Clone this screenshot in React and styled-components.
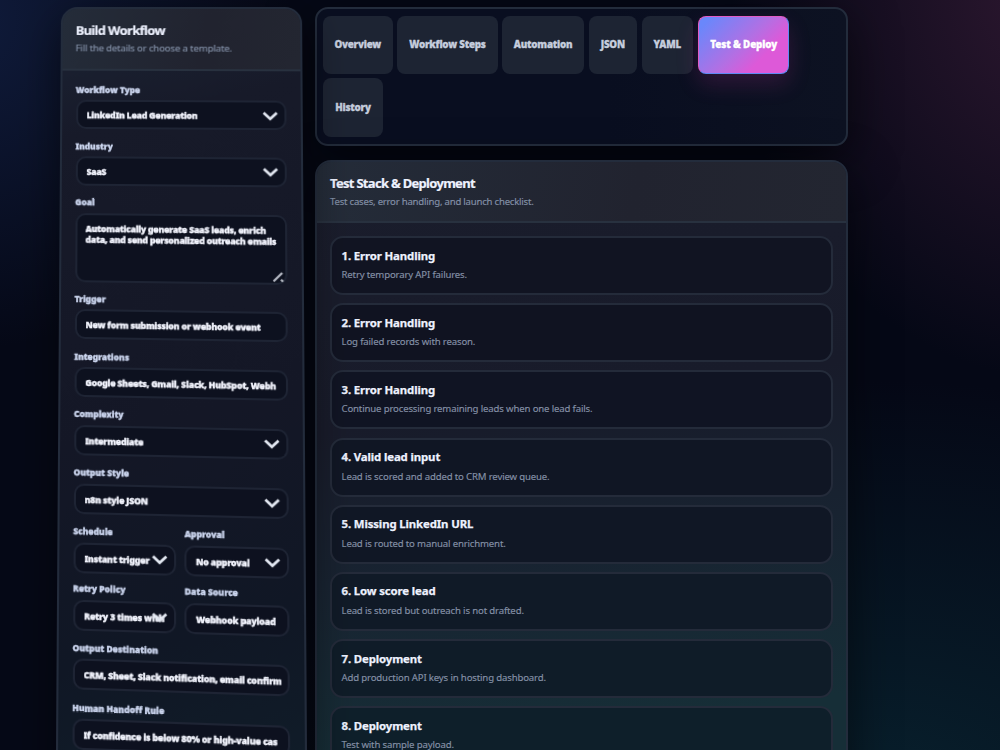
import React from "react";
import styled, { createGlobalStyle, css } from "styled-components";

const GlobalStyle = createGlobalStyle`
  *, *::before, *::after { box-sizing: border-box; }
  body {
    margin: 0;
    overflow: hidden;
    background: #030613;
    font-family: "Noto Sans", "Open Sans", sans-serif;
    color: #eef2ff;
  }
`;

const Page = styled.main`
  display: flex;
  align-items: flex-start;
  gap: 13px;
  height: 750px;
  padding: 7px 0 0 61px;
  overflow: hidden;
  background:
    radial-gradient(circle at -40px 20px, rgba(26, 46, 96, 0.5), transparent 330px),
    radial-gradient(ellipse 330px 400px at 1060px -20px, rgba(74, 34, 66, 0.6), transparent),
    radial-gradient(ellipse 640px 420px at 880px 800px, rgba(10, 48, 60, 0.6), transparent),
    #050816;
`;

const surface = css`
  border: 2px solid #232c3c;
  box-shadow: 0 14px 48px rgba(0, 0, 0, 0.55);
`;

const Sidebar = styled.aside`
  ${surface}
  flex: none;
  width: 241px;
  height: 860px;
  border-radius: 17px;
  overflow: hidden;
  background: linear-gradient(165deg, #1c2435 0, #171a29 130px, #141726 430px, #101725 640px, #10202b 100%);
  transform-origin: 0 0;
  transform: matrix3d(0.988493, 0, 0, -0.000047948, -0.0064706, 0.96023, 0, -0.0000536, 0, 0, 1, 0, 0, 0, 0, 1);
`;

const PanelHeader = styled.header`
  height: ${(p) => p.$height}px;
  padding: ${(p) => p.$top}px 13px 0;
  border-bottom: 2px solid #28313f;
  background: linear-gradient(100deg, #242c39, #21232f 60%, #232631);
`;

const PanelTitle = styled.h2`
  margin: 0;
  font-size: 13px;
  line-height: 18px;
  font-weight: 700;
  letter-spacing: ${(p) => p.$tracking}px;
  -webkit-text-stroke: 0.2px currentColor;
  white-space: nowrap;
`;

const PanelNote = styled.p`
  margin: 1px 0 0;
  font-size: 9.6px;
  line-height: 18px;
  letter-spacing: ${(p) => p.$tracking}px;
  color: #8390a7;
  -webkit-text-stroke: 0.15px currentColor;
  white-space: nowrap;
`;

const Form = styled.div`
  display: flex;
  flex-direction: column;
  gap: 10.5px;
  padding: 13px 14px 0 13.5px;
`;

const FieldRow = styled.div`
  display: flex;
  gap: 8px;
  margin-bottom: ${(p) => p.$pull ?? 0}px;
`;

const Field = styled.div`
  display: flex;
  flex: 1 1 0;
  min-width: 0;
  flex-direction: column;
  gap: 5.4px;
`;

const FieldLabel = styled.span`
  height: 12px;
  font-size: 8.4px;
  line-height: 13px;
  font-weight: 900;
  letter-spacing: -0.03px;
  color: #cbd5ee;
  -webkit-text-stroke: 0.35px currentColor;
  white-space: nowrap;
`;

const Control = styled.span`
  position: relative;
  display: block;
  height: ${(p) => (p.$tall ? 70 : 30)}px;
  padding: ${(p) => (p.$tall ? "9.5px 6px 0 8.5px" : "8px 6px 0 9px")};
  border: 2px solid #1e2434;
  border-radius: 10px;
  background: #0d111f;
`;

const Value = styled.span`
  display: block;
  overflow: hidden;
  white-space: ${(p) => (p.$wrap ? "pre" : "nowrap")};
  font-size: 8.6px;
  line-height: ${(p) => (p.$wrap ? 11 : 12)}px;
  font-weight: 900;
  letter-spacing: ${(p) => (p.$wrap ? -0.22 : -0.19)}px;
  color: #f4f6ff;
  -webkit-text-stroke: 0.35px currentColor;
`;

const Chevron = styled.svg`
  position: absolute;
  top: 8.5px;
  right: 6px;
  width: 16px;
  height: 10px;
  fill: none;
  stroke: #e3e8f2;
  stroke-width: 2.7;
`;

const Grip = styled.svg`
  position: absolute;
  right: 1px;
  bottom: 0;
  width: 12px;
  height: 12px;
  fill: none;
  stroke: #b6bac4;
  stroke-width: 2.2;
`;

const Content = styled.section`
  flex: none;
  display: flex;
  flex-direction: column;
  gap: 14px;
  width: 533px;
`;

const TabBar = styled.nav`
  ${surface}
  display: flex;
  flex-wrap: wrap;
  align-content: flex-start;
  gap: 4.7px;
  height: 138.5px;
  padding: 7px 0 0 6px;
  border-radius: 13px;
  background: linear-gradient(90deg, #090e20 55%, #0d1222);
`;

const Tab = styled.button`
  width: ${(p) => p.$width}px;
  height: ${(p) => p.$height ?? 57.5}px;
  padding: 0;
  border: 0;
  border-radius: 8px;
  font-family: inherit;
  font-size: 9.8px;
  font-weight: 900;
  letter-spacing: -0.22px;
  color: #c5cddd;
  -webkit-text-stroke: 0.3px currentColor;
  background: #1d2433;
  white-space: nowrap;
  ${(p) =>
    p.$active &&
    css`
      margin-left: 1px;
      color: #fff;
      letter-spacing: -0.12px;
      border: 1px solid;
      border-color: #e05bc4 #5f8af5 #5f8af5 #e05bc4;
      background: linear-gradient(135deg, #6a87fb 8%, #b36fe3 50%, #dd59d8 72%);
      box-shadow: 0 10px 22px rgba(190, 50, 150, 0.2);
    `}
`;

const Card = styled.article`
  ${surface}
  height: 640px;
  border-radius: 16px;
  overflow: hidden;
  background: linear-gradient(172deg, #1a1d2c 0, #181b2a 270px, #182331 420px, #162e37 600px);
`;

const List = styled.ol`
  display: flex;
  flex-direction: column;
  gap: 8.2px;
  margin: 0;
  padding: 13.5px 13px;
  list-style: none;
`;

const Item = styled.li`
  height: 59px;
  padding: 8.5px 9.5px 0;
  border: 2px solid #242b3a;
  border-radius: 13px;
  background: ${(p) => p.$tone};
`;

const ItemTitle = styled.h3`
  margin: 0;
  font-size: 11.4px;
  line-height: 17px;
  font-weight: 700;
  letter-spacing: -0.13px;
  -webkit-text-stroke: 0.25px currentColor;
`;

const ItemNote = styled.p`
  margin: 3.5px 0 0;
  font-size: 9.6px;
  line-height: 15px;
  letter-spacing: -0.15px;
  color: #8490a6;
  -webkit-text-stroke: 0.15px currentColor;
`;

const rows = [
  { fields: [{ label: "Workflow Type", value: "LinkedIn Lead Generation", kind: "select" }] },
  { fields: [{ label: "Industry", value: "SaaS", kind: "select" }] },
  {
    pull: -0.7,
    fields: [
      {
        label: "Goal",
        value: "Automatically generate SaaS leads, enrich\ndata, and send personalized outreach emails",
        kind: "area",
      },
    ],
  },
  { fields: [{ label: "Trigger", value: "New form submission or webhook event" }] },
  { fields: [{ label: "Integrations", value: "Google Sheets, Gmail, Slack, HubSpot, Webh" }] },
  { fields: [{ label: "Complexity", value: "Intermediate", kind: "select" }] },
  { fields: [{ label: "Output Style", value: "n8n style JSON", kind: "select" }] },
  {
    pull: -2,
    fields: [
      { label: "Schedule", value: "Instant trigger", kind: "select" },
      { label: "Approval", value: "No approval", kind: "select" },
    ],
  },
  {
    pull: -0.5,
    fields: [
      { label: "Retry Policy", value: "Retry 3 times with", kind: "select" },
      { label: "Data Source", value: "Webhook payload" },
    ],
  },
  { pull: 0.5, fields: [{ label: "Output Destination", value: "CRM, Sheet, Slack notification, email confirm" }] },
  { fields: [{ label: "Human Handoff Rule", value: "If confidence is below 80% or high-value cas" }] },
];

const tabs = [
  ["Overview", 69.5],
  ["Workflow Steps", 100.5],
  ["Automation", 81.5],
  ["JSON", 48.5],
  ["YAML", 51],
  ["Test & Deploy", 90.5],
  ["History", 60, 59],
];

const items = [
  ["Error Handling", "Retry temporary API failures.", "#111422"],
  ["Error Handling", "Log failed records with reason.", "#101321"],
  ["Error Handling", "Continue processing remaining leads when one lead fails.", "#101423"],
  ["Valid lead input", "Lead is scored and added to CRM review queue.", "#101624"],
  ["Missing LinkedIn URL", "Lead is routed to manual enrichment.", "#101725"],
  ["Low score lead", "Lead is stored but outreach is not drafted.", "#101a27"],
  ["Deployment", "Add production API keys in hosting dashboard.", "#0f1c28"],
  ["Deployment", "Test with sample payload.", "#0e1f2a"],
];

function FormField({ label, value, kind }) {
  return (
    <Field>
      <FieldLabel>{label}</FieldLabel>
      <Control $tall={kind === "area"}>
        <Value $wrap={kind === "area"}>{value}</Value>
        {kind === "select" && (
          <Chevron viewBox="0 0 16 10">
            <path d="M1.5 1.5 8 7.7l6.5-6.2" />
          </Chevron>
        )}
        {kind === "area" && (
          <Grip viewBox="0 0 12 12">
            <path d="M1.5 10.5 10 2M8.8 8.8l2 2" />
          </Grip>
        )}
      </Control>
    </Field>
  );
}

export default function App() {
  return (
    <>
      <GlobalStyle />
      <Page>
        <Sidebar>
          <PanelHeader $height={63.7} $top={12.7}>
            <PanelTitle $tracking={-0.64}>Build Workflow</PanelTitle>
            <PanelNote $tracking={-0.15}>Fill the details or choose a template.</PanelNote>
          </PanelHeader>
          <Form>
            {rows.map((row) => (
              <FieldRow key={row.fields[0].label} $pull={row.pull}>
                {row.fields.map((f) => (
                  <FormField key={f.label} {...f} />
                ))}
              </FieldRow>
            ))}
          </Form>
        </Sidebar>
        <Content>
          <TabBar>
            {tabs.map(([name, width, height]) => (
              <Tab key={name} $width={width} $height={height} $active={name === "Test & Deploy"}>
                {name}
              </Tab>
            ))}
          </TabBar>
          <Card>
            <PanelHeader $height={61} $top={12}>
              <PanelTitle $tracking={-0.7}>Test Stack &amp; Deployment</PanelTitle>
              <PanelNote $tracking={-0.22}>Test cases, error handling, and launch checklist.</PanelNote>
            </PanelHeader>
            <List>
              {items.map(([title, note, tone], i) => (
                <Item key={note} $tone={tone}>
                  <ItemTitle>
                    {i + 1}. {title}
                  </ItemTitle>
                  <ItemNote>{note}</ItemNote>
                </Item>
              ))}
            </List>
          </Card>
        </Content>
      </Page>
    </>
  );
}
